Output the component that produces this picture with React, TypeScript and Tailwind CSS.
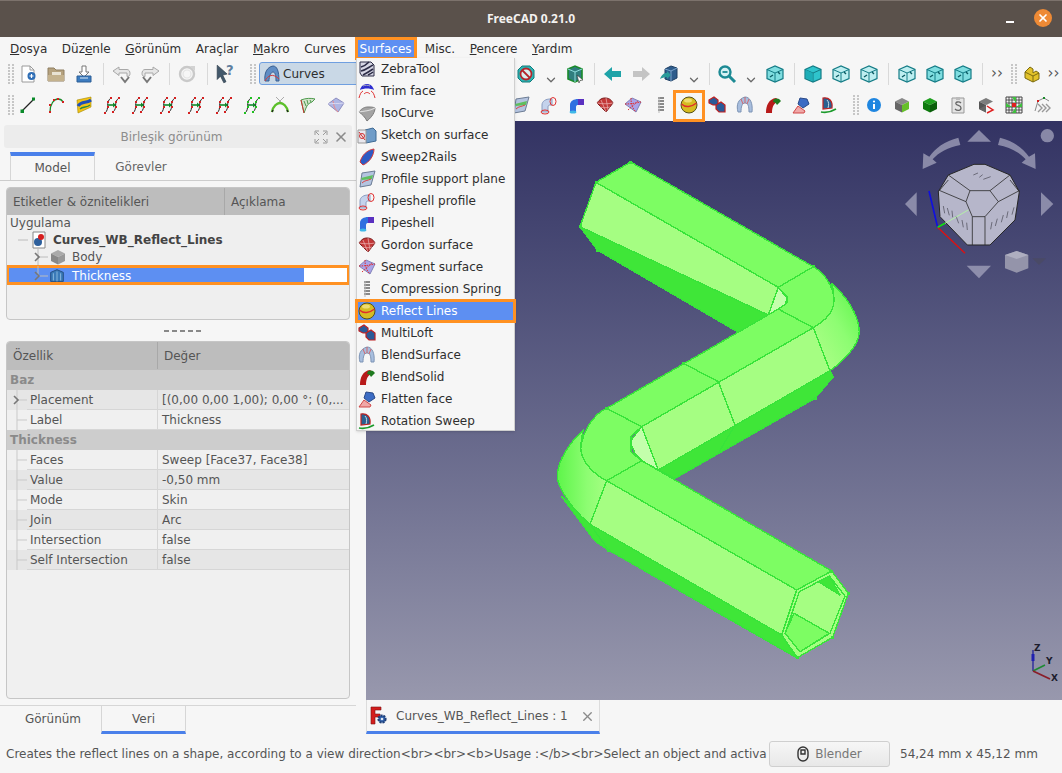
import type { ReactNode } from "react";
import { ChevronDown, X } from "lucide-react";

// Icons
function Ico({ children, size = 20 }: { children: ReactNode; size?: number }) {
  return (
    <svg width={size} height={size} viewBox="0 0 20 20" fill="none" className="shrink-0">
      {children}
    </svg>
  );
}

const NewDoc = () => (
  <Ico>
    <path d="M4 2h8l4 4v12H4z" fill="#fff" stroke="#9a9a9a" />
    <path d="M12 2v4h4" stroke="#9a9a9a" />
    <circle cx="13.5" cy="12" r="4" fill="#2d6db5" />
    <path d="M11.5 12h4M13.5 10v4" stroke="#fff" strokeWidth="1.2" />
  </Ico>
);
const OpenDoc = () => (
  <Ico>
    <path d="M2 4h6l2 2h8v11H2z" fill="#b5a27f" stroke="#8f7f62" />
    <path d="M6 8h9v3H6z" fill="#e9e3d4" />
    <path d="M2 11h16v6H2z" fill="#c4b28e" />
  </Ico>
);
const SaveDoc = () => (
  <Ico>
    <path d="M8 2h4v6h3l-5 5-5-5h3z" fill="#fff" stroke="#777" />
    <path d="M3 12h14v6H3z" fill="#3c7cc0" stroke="#2c5f96" />
    <path d="M6 14h8" stroke="#dce9f5" />
  </Ico>
);
const Undo = ({ flip = false }: { flip?: boolean }) => (
  <Ico>
    <g transform={flip ? "matrix(-1 0 0 1 20 0)" : undefined}>
      <path d="M1 7l6-4v2.5h8c2 0 3 2 3 4s-1 3-3 3V9H7v2.5z" fill="#e6e6e6" stroke="#a8a8a8" />
      <path d="M9 13l4 5 4-5" stroke="#777" strokeWidth="2" />
    </g>
  </Ico>
);
const Refresh = () => (
  <Ico>
    <circle cx="10" cy="10" r="7" stroke="#c9c9c9" strokeWidth="2.4" />
    <circle cx="10" cy="10" r="4" stroke="#e4e4e4" strokeWidth="1.2" />
    <path d="M13 2h5v5z" fill="#d2d2d2" />
  </Ico>
);
const WhatsThis = () => (
  <Ico size={22}>
    <path d="M2 2l9 8-4 1 3 6-2 1-3-6-3 3z" fill="#43586b" stroke="#2a3a48" strokeWidth=".6" />
    <text x="10" y="11" fontSize="12" fontWeight="700" fill="#5f7f9f" fontFamily="DejaVu Sans, sans-serif">?</text>
  </Ico>
);
const NoEntry = () => (
  <Ico>
    <path d="M6 2h8l4 4v8l-4 4H6l-4-4V6z" fill="#2cb5b5" stroke="#137a7a" />
    <circle cx="10" cy="10" r="5.5" fill="#d8f0f0" stroke="#b3262c" strokeWidth="1.8" />
    <path d="M6 6l8 8" stroke="#b3262c" strokeWidth="1.8" />
  </Ico>
);
const BoxSel = () => (
  <Ico>
    <path d="M3 5l7-3 7 3v10l-7 3-7-3z" fill="#307e7e" stroke="#1a8a2a" strokeWidth="1.6" />
    <path d="M3 5l7 3 7-3M10 8v10" stroke="#8fdcdc" />
    <path d="M12 11l6 5-3 .5-1 2.5z" fill="#fff" stroke="#333" strokeWidth=".6" />
  </Ico>
);
const Arrow = ({ dir, color }: { dir: "l" | "r"; color: string }) => (
  <Ico>
    <path
      d={dir === "l" ? "M1 10l8-7v4h9v6H9v4z" : "M19 10l-8-7v4H2v6h9v4z"}
      fill={color}
    />
  </Ico>
);
const BoxArrow = () => (
  <Ico>
    <path d="M6 5l6-3 6 2v10l-6 3-6-2z" fill="#2e5c8c" stroke="#1e3f63" />
    <path d="M6 5l6 2 6-3M12 7v10" stroke="#7aa4cc" />
    <path d="M1 15c2-5 4-6 7-6V7l4 4-4 4v-2c-3 0-5 1-7 2z" fill="#2a9a9a" />
  </Ico>
);
const ZoomIco = () => (
  <Ico>
    <circle cx="8" cy="8" r="5.5" stroke="#1c8a94" strokeWidth="2.4" fill="#d7f1f3" />
    <path d="M5.5 8h5" stroke="#1c8a94" strokeWidth="1.8" />
    <path d="M12 12l6 6" stroke="#1c8a94" strokeWidth="3" />
  </Ico>
);
const TealCube = ({ v }: { v: number }) => (
  <Ico>
    <path d="M2 5.5L10 2l8 3.5v9L10 18l-8-3.5z" fill={v === 0 ? "#2fc4cc" : v > 3 ? "#7fdde0" : "#bdeef0"} stroke="#147c86" strokeWidth="1.2" />
    <path d="M2 5.5L10 9l8-3.5M10 9v9" stroke="#147c86" strokeWidth="1" />
    {v === 0 && <path d="M3 6l6.5 3v8L3 14z" fill="#1eaeb8" />}
    {v > 0 && <path d="M5 13l3-2M13 8l2 2" stroke="#0c5a62" strokeWidth="1.4" />}
  </Ico>
);
const PartIco = () => (
  <Ico>
    <path d="M3 8l5-5 3 2v4l3-2 3 2v6l-6 3-8-4z" fill="#e2c22a" stroke="#7a6a10" />
    <path d="M3 8l8 4v6M11 12l6-3" stroke="#7a6a10" />
  </Ico>
);

// Curves workbench
const LineIco = () => (
  <Ico>
    <path d="M4 16L16 4" stroke="#222" strokeWidth="1.2" />
    <rect x="2.5" y="14.5" width="3.5" height="3.5" fill="#0a8a2a" />
    <rect x="14" y="2.5" width="3" height="3" fill="#0a8a2a" />
  </Ico>
);
const ArcIco = () => (
  <Ico>
    <path d="M4 17C4 9 8 4 12 4c2 0 4 1 5 3" stroke="#1a8a2a" strokeWidth="1.3" />
    {[[4, 17], [4, 10], [8, 5], [12, 4], [17, 7]].map(([x, y], i) => (
      <rect key={i} x={x - 1} y={y - 1} width="2" height="2" fill="#d42020" />
    ))}
  </Ico>
);
const YellowIco = () => (
  <Ico>
    <path d="M3 5l14-3v10L4 18z" fill="#f2c316" stroke="#a38600" strokeWidth=".6" />
    <path d="M4 11c4-6 8-2 13-6" stroke="#1d4fb8" strokeWidth="3" />
    <path d="M6 14c3-3 7-1 10-4" stroke="#2b8a3e" strokeWidth="1.3" />
  </Ico>
);
const CurveIco = ({ dot = "#d42020" }: { dot?: string }) => (
  <Ico>
    <path d="M3 18C8 14 3 7 9 3M11 17c5-4 0-10 6-14" stroke="#222" strokeWidth="1" />
    <path d="M6 10h7" stroke="#108a2a" strokeWidth="1.6" />
    <path d="M11 7.5l3 2.5-3 2.5z" fill="#108a2a" />
    {[[3, 18], [6, 12], [6, 7], [9, 3], [11, 17], [14, 12], [14, 7], [17, 3]].map(([x, y], i) => (
      <rect key={i} x={x - 1} y={y - 1} width="2" height="2" fill={dot} />
    ))}
  </Ico>
);
const TrimX = () => (
  <Ico>
    <path d="M6 2l8 8M14 2l-8 8" stroke="#aaa" />
    <path d="M2 17C3 11 7 8 10 8s7 3 8 9" stroke="#5cc02a" strokeWidth="2.4" />
    <path d="M2 17l1-2M18 17l-1-2" stroke="#222" strokeWidth="1.4" />
  </Ico>
);
const Hatched = () => (
  <Ico>
    <path d="M3 5c5-2 10-2 14-1l-3 3c-3 1-5 3-6 6l-2 5z" fill="#d4e4cc" stroke="#4d9a4d" />
    <path d="M6 6l2 5M9 5l1 4M12 5l1 2" stroke="#4d9a4d" />
    <path d="M3 5l3 13" stroke="#c33" />
  </Ico>
);
const BlueSheet = () => (
  <Ico>
    <path d="M2 9l8-6 8 5-6 9z" fill="#aeb6e4" stroke="#8d8dc0" />
    <path d="M7 6c1 3 0 6 5 11" stroke="#e88" />
    <path d="M2 9c5-1 10 0 16-1" stroke="#d8d8f0" />
  </Ico>
);
const Zebra = () => (
  <Ico>
    <path d="M3 3h11l3 3v11H5l-2-3z" fill="#d6d6e4" stroke="#2c2c46" />
    <path d="M4 8c4-1 6-3 8-5M4 12c5-1 8-4 12-6M6 16c4-2 7-4 10-6M11 16c2-1 4-2 5-3" stroke="#2c2c46" strokeWidth="1.6" />
  </Ico>
);
const TrimFace = () => (
  <Ico>
    <path d="M3 9c1-4 4-6 7-6s6 2 7 6c-4-2-10-2-14 0z" fill="#2d2dd0" />
    <path d="M6 5c2-1 5-1 7 0" stroke="#aab" />
    <path d="M2 17c1-4 2-6 4-7M18 17c-1-4-2-6-4-7M7 13c2-2 4-2 6 0" stroke="#e03030" />
  </Ico>
);
const IsoCurve = () => (
  <Ico>
    <path d="M2 9c3-4 6-5 9-5s5 0 7 1c0 4-3 9-8 13-2-4-5-7-8-9z" fill="#a3a3a3" stroke="#7a7a7a" />
    <path d="M2 9c5-1 11-1 16-4" stroke="#e4e4e4" />
  </Ico>
);
const SketchSurf = () => (
  <Ico>
    <path d="M8 5l8-2 3 3v10l-10 2z" fill="#6f9cc8" stroke="#3f6a94" />
    <path d="M1 5h8v13H1z" fill="#e8e8ee" stroke="#999" />
    <circle cx="5" cy="11" r="2.5" stroke="#d03030" />
    <path d="M2 7l6 8" stroke="#d03030" />
  </Ico>
);
const Sweep2 = () => (
  <Ico>
    <path d="M3 15C5 8 10 3 17 2c0 6-4 13-11 16z" fill="#2d5ac4" stroke="#d43c3c" />
  </Ico>
);
const Profile = () => (
  <Ico>
    <path d="M5 4l13-2-4 14-11 2z" fill="#b4c4e0" stroke="#6c7c94" />
    <path d="M4 9l12-3-1 4-10 1z" fill="#5fbf5f" />
    <path d="M5 14c3-3 5-2 9-4" stroke="#d44" />
  </Ico>
);
const PipeProfile = () => (
  <Ico>
    <path d="M3 17V10c0-4 4-6 8-6h2v6h-2c-1 0-2 .5-2 2v5z" fill="#c4d2ec" stroke="#8a9cc0" />
    <ellipse cx="14" cy="6.5" rx="3" ry="4" stroke="#e03030" />
    <ellipse cx="6" cy="17" rx="4" ry="2" stroke="#e03030" />
  </Ico>
);
const Pipeshell = () => (
  <Ico>
    <path d="M3 17V10c0-4 4-6 8-6h6v6h-6c-1 0-2 .5-2 2v5z" fill="#2f6fe0" />
    <path d="M11 4h6v6h-6z" fill="#5a30c0" />
    <ellipse cx="6" cy="17" rx="3.4" ry="1.6" fill="#3fb8e8" />
  </Ico>
);
const Gordon = () => (
  <Ico>
    <path d="M2 8c3-4 5-5 8-5s6 1 8 5l-7 9z" fill="#c33838" stroke="#7a1c1c" />
    <path d="M6 5l5 12M11 3l2 12M2 8c5 1 11 1 16 0M5 12c3 1 7 1 10 0" stroke="#e8a8a8" strokeWidth=".8" />
  </Ico>
);
const Segment = () => (
  <Ico>
    <path d="M2 9l7-6 9 4-5 10z" fill="#aaa4e8" stroke="#8282b8" />
    <path d="M2 9c6 0 11-1 16-2M8 3c0 5 1 10 5 14M5 15l10-9" stroke="#e03030" strokeDasharray="1.5 1" />
  </Ico>
);
const Spring = () => (
  <Ico>
    <path d="M7 3h6M7 6h6M7 9h6M7 12h6M7 15h6" stroke="#666" strokeWidth="1.6" />
    <path d="M8 2v16" stroke="#bbb" />
  </Ico>
);
const Reflect = () => (
  <Ico>
    <circle cx="10" cy="10" r="8" fill="#d6bc22" stroke="#55501a" />
    <path d="M2.5 9c4 4 10 3 15-1" stroke="#e02c2c" strokeWidth="1.4" />
    <ellipse cx="9" cy="5.5" rx="4" ry="2" fill="#eedc70" />
  </Ico>
);
const MultiLoft = () => (
  <Ico>
    <path d="M2 5l5-3 4 3v5H6L2 8z" fill="#2a5a98" stroke="#c02020" strokeWidth="1.2" />
    <path d="M9 10l5-3 4 3v7h-6l-3-3z" fill="#2a5a98" stroke="#c02020" strokeWidth="1.2" />
  </Ico>
);
const BlendSurf = () => (
  <Ico>
    <path d="M3 17C1 10 3 4 10 2c5 0 8 6 7 15h-3c0-6-1-9-4-9s-4 4-4 9z" fill="#a8bede" stroke="#7d94b5" />
    <path d="M10 2v6M6 4l2 5M14 4l-2 5" stroke="#e05050" strokeWidth=".8" />
  </Ico>
);
const BlendSolid = () => (
  <Ico>
    <path d="M3 18c0-8 3-14 10-15l4 3c-5 1-8 4-8 12z" fill="#b81a1a" />
    <path d="M11 4c3-1 5-1 7 2l-4 4c-1-2-2-3-4-3z" fill="#1f7a1f" />
  </Ico>
);
const Flatten = () => (
  <Ico>
    <path d="M9 3l7 1 2 5-6 4-5-4z" fill="#3c6cc4" stroke="#2a4a88" />
    <path d="M2 18l5-7 7 5-1 2z" fill="#f0a8a8" stroke="#d04848" />
  </Ico>
);
const Rotation = () => (
  <Ico>
    <path d="M4 3c6-1 10 3 9 10l-9 1z" fill="#2a6090" stroke="#c02020" strokeWidth="1.2" />
    <path d="M8 5c2 2 2 5 1 8" stroke="#c9d8e8" />
    <path d="M2 17c5 1 10 0 15-3" stroke="#1a9a2a" strokeWidth="1.6" />
  </Ico>
);
const InfoIco = () => (
  <Ico>
    <circle cx="10" cy="10" r="7" fill="#1f86e0" />
    <path d="M10 9v5" stroke="#fff" strokeWidth="2" />
    <circle cx="10" cy="6.5" r="1.1" fill="#fff" />
  </Ico>
);
const GrayCube = ({ top, left, right }: { top: string; left: string; right: string }) => (
  <Ico>
    <path d="M10 3l7 3.5L10 10 3 6.5z" fill={top} />
    <path d="M3 6.5L10 10v7.5L3 14z" fill={left} />
    <path d="M17 6.5L10 10v7.5l7-3.5z" fill={right} />
  </Ico>
);
const SheetS = () => (
  <Ico>
    <path d="M4 3h12v15H4z" fill="#e4e4e4" stroke="#999" />
    <path d="M8 2h4v3H8z" fill="#bbb" />
    <path d="M13 8c-2-2-6-1-5 1s5 1 5 4-4 3-6 1" stroke="#666" strokeWidth="1.3" />
  </Ico>
);
const GrayRed = () => (
  <Ico>
    <path d="M10 3l7 3.5L10 10 3 6.5z" fill="#7c7c7c" />
    <path d="M3 6.5L10 10v7.5L3 14z" fill="#555" />
    <path d="M17 6.5L10 10v7.5l-7-3.5z" fill="#666" />
    <path d="M11 11l6 4-6 3" stroke="#e02020" strokeWidth="1.5" />
  </Ico>
);
const GridIco = () => (
  <Ico>
    <path d="M2 2h16v16H2z" fill="#f4f4f4" stroke="#444" />
    <path d="M5 2v16M8 2v16M12 2v16M15 2v16M2 5h16M2 8h16M2 12h16M2 15h16" stroke="#333" strokeWidth=".8" />
    <path d="M8 8h4v4H8z" fill="#e02020" />
    <path d="M8 2h4v6M8 18h4v-6M2 8v4h6M18 8v4h-6" fill="#3dbf3d" />
  </Ico>
);
const WireArrow = () => (
  <Ico>
    <path d="M3 16L6 6l6-3 5 3" stroke="#888" />
    <path d="M10 9l4 4-4 4M14 9l4 4-4 4M6 9l4 4-4 4" stroke="#999" strokeWidth="1.4" />
    <rect x="5" y="5" width="2" height="2" fill="#d42020" />
    <rect x="11" y="2" width="2" height="2" fill="#1a8a2a" />
  </Ico>
);
const CurvesLogo = () => (
  <Ico>
    <path d="M3 17C2 9 5 3 11 2c4 0 6 5 6 15h-3c0-6-1-9-3-9s-4 4-4 9z" fill="#5f8dc4" stroke="#3a5f90" />
    <path d="M3 17c3-6 8-8 14-2" stroke="#d43c3c" />
  </Ico>
);
const FreeCadIco = () => (
  <Ico size={20}>
    <path d="M2 1h10v3H6v4h5v3H6v7H2z" fill="#d41e1e" stroke="#7a1010" strokeWidth=".6" />
    <circle cx="13" cy="13" r="3.6" fill="#2f5fa8" stroke="#1f3f78" strokeWidth="2" strokeDasharray="2 1" />
    <circle cx="13" cy="13" r="1.3" fill="#dfe8f4" />
  </Ico>
);

// Toolbar pieces
function Cell({ children }: { children: ReactNode }) {
  return <div className="flex h-7 w-7 shrink-0 items-center justify-center">{children}</div>;
}
function Grip() {
  return (
    <div className="grid w-[6px] shrink-0 grid-cols-2 gap-x-[1px] gap-y-[1px]">
      {Array.from({ length: 14 }).map((_, i) => (
        <span key={i} className="h-[2px] w-[2px] bg-[#c6c6c6]" />
      ))}
    </div>
  );
}
function Sep({ className }: { className: string }) {
  return <div className={`h-[22px] w-px shrink-0 bg-[#d9d9d9] ${className}`} />;
}
function Chevron({ width }: { width: string }) {
  return (
    <div className={`flex h-7 shrink-0 items-end justify-center pb-[1px] ${width}`}>
      <ChevronDown size={14} strokeWidth={2.2} className="text-[#6a6a6a]" />
    </div>
  );
}
function More({ width }: { width: string }) {
  return (
    <div className={`flex h-7 shrink-0 items-center justify-center text-[15px] leading-none text-[#555] ${width}`}>
      ››
    </div>
  );
}

const menuItems: [string, ReactNode][] = [
  ["ZebraTool", <Zebra />],
  ["Trim face", <TrimFace />],
  ["IsoCurve", <IsoCurve />],
  ["Sketch on surface", <SketchSurf />],
  ["Sweep2Rails", <Sweep2 />],
  ["Profile support plane", <Profile />],
  ["Pipeshell profile", <PipeProfile />],
  ["Pipeshell", <Pipeshell />],
  ["Gordon surface", <Gordon />],
  ["Segment surface", <Segment />],
  ["Compression Spring", <Spring />],
  ["Reflect Lines", <Reflect />],
  ["MultiLoft", <MultiLoft />],
  ["BlendSurface", <BlendSurf />],
  ["BlendSolid", <BlendSolid />],
  ["Flatten face", <Flatten />],
  ["Rotation Sweep", <Rotation />],
];

function TopMenu() {
  const plain = "px-[7.25px]";
  return (
    <div className="flex h-[23px] shrink-0 items-center bg-[#f6f6f6] pl-[2.75px] text-[#2e2e2e]">
      <span className={plain}><u>D</u>osya</span>
      <span className={plain}>Düz<u>e</u>nle</span>
      <span className={plain}><u>G</u>örünüm</span>
      <span className={plain}>Araçlar</span>
      <span className={plain}><u>M</u>akro</span>
      <span className={plain}>Curves</span>
      <span className="ml-[1.5px] mr-[1px] flex h-[23px] items-center border-[3px] border-[#ff9122] bg-[#5d8ff2] px-[2px] text-white">
        Surfaces
      </span>
      <span className={plain}>Misc.</span>
      <span className={plain}><u>P</u>encere</span>
      <span className={plain}><u>Y</u>ardım</span>
    </div>
  );
}

function ToolbarOne() {
  return (
    <div className="flex h-[27px] shrink-0 items-center bg-[#f6f6f6] pl-2">
      <Grip />
      <Cell><NewDoc /></Cell>
      <Cell><OpenDoc /></Cell>
      <Cell><SaveDoc /></Cell>
      <Sep className="ml-[5px] mr-[4px]" />
      <Cell><Undo /></Cell>
      <Cell><Undo flip /></Cell>
      <Sep className="ml-[5px] mr-[3px]" />
      <Cell><Refresh /></Cell>
      <Sep className="ml-[6px] mr-[4px]" />
      <Cell><WhatsThis /></Cell>
      <div className="ml-[10px]"><Grip /></div>
      <div className="ml-[3px] flex h-[23px] w-[253px] shrink-0 items-center gap-[1px] rounded-[3px] border border-[#6f9fe0] bg-[#c9d8e6] pl-[2px] text-[#2e2e2e]">
        <CurvesLogo />
        Curves
      </div>
      <Cell><NoEntry /></Cell>
      <Chevron width="w-[21px]" />
      <Cell><BoxSel /></Cell>
      <Sep className="ml-[5px] mr-[4px]" />
      <Cell><Arrow dir="l" color="#1ea3a8" /></Cell>
      <Cell><Arrow dir="r" color="#c4c4c4" /></Cell>
      <Cell><BoxArrow /></Cell>
      <Chevron width="w-[21px]" />
      <Sep className="ml-[5px] mr-[3px]" />
      <Cell><ZoomIco /></Cell>
      <Chevron width="w-[20px]" />
      <Cell><TealCube v={5} /></Cell>
      <Sep className="ml-[5px] mr-[4px]" />
      <Cell><TealCube v={0} /></Cell>
      <Cell><TealCube v={1} /></Cell>
      <Cell><TealCube v={2} /></Cell>
      <Sep className="ml-[5px] mr-[4px]" />
      <Cell><TealCube v={3} /></Cell>
      <Cell><TealCube v={4} /></Cell>
      <Cell><TealCube v={5} /></Cell>
      <Sep className="ml-[5px] mr-0" />
      <More width="w-7" />
      <Grip />
      <div className="ml-px"><Cell><PartIco /></Cell></div>
      <More width="w-[15px]" />
    </div>
  );
}

function ToolbarTwo() {
  return (
    <div className="flex h-[34px] shrink-0 items-center bg-[#f6f6f6] pl-2 pt-px">
      <Grip />
      <Cell><LineIco /></Cell>
      <Cell><ArcIco /></Cell>
      <Cell><YellowIco /></Cell>
      <Cell><CurveIco /></Cell>
      <Cell><CurveIco /></Cell>
      <Cell><CurveIco /></Cell>
      <Cell><CurveIco /></Cell>
      <Cell><CurveIco /></Cell>
      <Cell><CurveIco dot="#1fc01f" /></Cell>
      <Cell><TrimX /></Cell>
      <Cell><Hatched /></Cell>
      <Cell><BlueSheet /></Cell>
      <div className="w-[157px] shrink-0" />
      <Cell><Profile /></Cell>
      <Cell><PipeProfile /></Cell>
      <Cell><Pipeshell /></Cell>
      <Cell><Gordon /></Cell>
      <Cell><Segment /></Cell>
      <Cell><Spring /></Cell>
      <div className="relative">
        <Cell><Reflect /></Cell>
        <div className="absolute left-[-2px] top-[-1px] h-[32px] w-[32px] border-[3px] border-[#ff9122]" />
      </div>
      <Cell><MultiLoft /></Cell>
      <Cell><BlendSurf /></Cell>
      <Cell><BlendSolid /></Cell>
      <Cell><Flatten /></Cell>
      <Cell><Rotation /></Cell>
      <div className="ml-[10px] mr-px"><Grip /></div>
      <Cell><InfoIco /></Cell>
      <Cell><GrayCube top="#8a8a8a" left="#666" right="#67c02a" /></Cell>
      <Cell><GrayCube top="#1fa01f" left="#0e7a0e" right="#0a5f0a" /></Cell>
      <Cell><SheetS /></Cell>
      <Cell><GrayRed /></Cell>
      <Cell><GridIco /></Cell>
      <Cell><WireArrow /></Cell>
    </div>
  );
}

function Dropdown() {
  return (
    <div className="absolute left-[356px] top-[58px] z-20 h-[373px] w-[159px] border-x border-b border-[#cfcfcf] bg-[#f6f6f6] text-[#2e2e2e] shadow-sm">
      {menuItems.map(([label, icon]) =>
        label === "Reflect Lines" ? (
          <div
            key={label}
            className="relative -mx-[2px] -my-px flex h-[24px] items-center border-[3px] border-[#ff9122] bg-[#5d8ff2] text-white"
          >
            <span className="-ml-px flex w-[20px] justify-center">{icon}</span>
            <span className="ml-[4px]">{label}</span>
          </div>
        ) : (
          <div key={label} className="flex h-[22px] items-center">
            <span className="flex w-[20px] justify-center">{icon}</span>
            <span className="ml-[4px]">{label}</span>
          </div>
        ),
      )}
    </div>
  );
}

// Tree branch drawing
function Branch({ arrow, up = true, down = false, light = false }: { arrow?: boolean; up?: boolean; down?: boolean; light?: boolean }) {
  const c = light ? "#c9c9c9" : "#bcbcbc";
  return (
    <svg width="20" height="20" viewBox="0 0 20 20" className="shrink-0">
      {up && <path d="M10 0v10" stroke={c} />}
      {down && <path d="M10 10v10" stroke={c} />}
      <path d="M10 10h10" stroke={c} />
      {arrow && <path d="M7 6l4 4-4 4" stroke="#777" strokeWidth="1.6" fill="none" />}
    </svg>
  );
}

function LeftTree() {
  return (
    <div className="ml-[6px] mr-[2px] mt-[6px] h-[133px] shrink-0 overflow-hidden rounded-[4px] border border-[#c6c6c6] bg-[#efefef]">
      <div className="flex h-[27px] bg-[#bdbdbd] text-[#555]">
        <div className="flex w-[218px] items-center border-r border-[#a8a8a8] pl-[6px]">Etiketler &amp; öznitelikleri</div>
        <div className="flex items-center pl-[6px]">Açıklama</div>
      </div>
      <div className="pl-[3px] leading-[16px] text-[#555]">Uygulama</div>
      <div className="flex h-[18px] items-center text-[#444]">
        <div className="ml-[1px]"><Branch up={false} /></div>
        <div className="ml-[3px]">
          <svg width="16" height="18" viewBox="0 0 16 18">
            <path d="M2 1h12v16H2z" fill="#fff" stroke="#888" />
            <circle cx="7" cy="11" r="4" fill="#2d5f9c" />
            <circle cx="10" cy="6" r="3" fill="#d61e1e" />
          </svg>
        </div>
        <span className="ml-[6px] font-bold">Curves_WB_Reflect_Lines</span>
      </div>
      <div className="flex h-[16px] items-center pl-[21px] text-[#555]">
        <Branch arrow down />
        <GrayCube top="#aaa" left="#888" right="#999" />
        <span className="ml-[4px]">Body</span>
      </div>
      <div className="relative -mx-px flex h-[20px] items-center border-[3px] border-[#ff9122] bg-white">
        <div className="flex h-full w-[295px] items-center bg-[#5d8ff2] pl-[19px] pt-px text-white">
          <Branch arrow />
          <Ico size={18}>
            <path d="M3 6l7-3 7 3v10H3z" fill="#3a7ab8" stroke="#204a78" />
            <path d="M10 5v11M6 7v8M14 7v8" stroke="#8fbce0" />
          </Ico>
          <span className="ml-[6px]">Thickness</span>
        </div>
      </div>
    </div>
  );
}

const baseRows = [
  { name: "Placement", value: "[(0,00 0,00 1,00); 0,00 °; (0,...", arrow: true },
  { name: "Label", value: "Thickness" },
];
const thicknessRows = [
  { name: "Faces", value: "Sweep [Face37, Face38]" },
  { name: "Value", value: "-0,50 mm" },
  { name: "Mode", value: "Skin" },
  { name: "Join", value: "Arc" },
  { name: "Intersection", value: "false" },
  { name: "Self Intersection", value: "false" },
];

function PropGroup({ label }: { label: string }) {
  return <div className="flex h-5 items-center bg-[#cdcdcd] pl-[3px] font-bold text-[#8a8a8a]">{label}</div>;
}

function PropRow({ name, value, arrow, odd }: { name: string; value: string; arrow?: boolean; odd: boolean }) {
  return (
    <div className={`flex h-5 text-[#555] ${odd ? "bg-[#e6e6e6]" : "bg-[#f0f0f0]"}`}>
      <Branch arrow={arrow} down light />
      <div className="flex w-[131px] items-center border-b border-r border-[#d6d6d6] pl-[3px]">{name}</div>
      <div className="flex min-w-0 flex-1 items-center overflow-hidden whitespace-nowrap border-b border-[#d6d6d6] pl-[4px]">{value}</div>
    </div>
  );
}

function PropertyPanel() {
  return (
    <div className="ml-[6px] mr-[2px] flex-1 overflow-hidden rounded-[4px] border border-[#c6c6c6] bg-[#f0f0f0]">
      <div className="flex h-[28px] bg-[#bdbdbd] pb-px text-[#555]">
        <div className="flex w-[151px] items-center border-r border-[#a8a8a8] pl-[6px]">Özellik</div>
        <div className="flex items-center pl-[6px]">Değer</div>
      </div>
      <PropGroup label="Baz" />
      {baseRows.map((r, i) => (
        <PropRow key={r.name} {...r} odd={i % 2 === 0} />
      ))}
      <PropGroup label="Thickness" />
      {thicknessRows.map((r, i) => (
        <PropRow key={r.name} {...r} odd={i % 2 === 1} />
      ))}
    </div>
  );
}

function LeftPanel() {
  return (
    <div className="flex w-[366px] shrink-0 flex-col bg-[#f6f6f6] pr-[14px]">
      <div className="ml-1 mt-1 flex h-[23px] shrink-0 items-center rounded-[3px] bg-[#ececec] text-[#8c8c8c]">
        <span className="flex-1 pl-[25px] text-center">Birleşik görünüm</span>
        <svg width="14" height="14" viewBox="0 0 14 14" className="mr-[5px]" fill="none" stroke="#9a9a9a">
          <path d="M1 5V1h4M9 1h4v4M13 9v4H9M5 13H1V9M2 2l3 3M12 2L9 5M12 12L9 9M2 12l3-3" />
        </svg>
        <X size={16} strokeWidth={2.4} className="mr-[3px] text-[#8a8a8a]" />
      </div>
      <div className="mt-1 -mr-[14px] flex h-[29px] shrink-0 border-b border-[#cdcdcd]">
        <div className="ml-[10px] flex w-[85px] items-center justify-center border-x border-t-4 border-x-[#d6d6d6] border-t-[#4a80ea] bg-[#f6f6f6] text-[#555]">
          Model
        </div>
        <div className="flex w-[92px] items-center justify-center pt-[2px] text-[#666]">Görevler</div>
      </div>
      <LeftTree />
      <div className="flex h-[21px] shrink-0 items-center justify-center gap-[3px] pl-[12px]">
        {[0, 1, 2, 3, 4].map((i) => (
          <span key={i} className="h-[2px] w-[5px] bg-[#888]" />
        ))}
      </div>
      <PropertyPanel />
      {/* Bottom tabs */}
      <div className="-mr-[4px] mt-[6px] mb-px flex h-[29px] shrink-0 border-t border-[#d6d6d6] text-[#555]">
        <div className="flex w-[101px] items-center justify-center pb-[3px] pl-[5px]">Görünüm</div>
        <div className="flex w-[85px] items-center justify-center border-x border-b-[3px] border-x-[#d6d6d6] border-b-[#4a80ea]">Veri</div>
      </div>
    </div>
  );
}

// 3D view
const LIGHT = "#a5fe82";
const MID = "#7dfd63";
const DARK = "#3fe638";

const vertices = [
  [630.7, 162], [596, 182.3], [580, 226.7], [597.3, 250], [813.3, 266.7], [683, 363.3],
  [606.7, 408.3], [815, 398.3], [608.3, 550], [831.7, 571], [848.3, 593.3], [832.7, 637.3], [797.3, 657.7],
];

function Pipe() {
  return (
    <g stroke="#38e43a" strokeWidth="1.4" strokeLinejoin="round" shapeRendering="crispEdges">
      <defs>
        <linearGradient id="elbowA" x1="0.9" y1="0" x2="0.2" y2="0.8">
          <stop offset="0" stopColor="#5ef54a" />
          <stop offset="0.55" stopColor="#8dfd72" />
          <stop offset="1" stopColor="#a5fe82" />
        </linearGradient>
        <linearGradient id="elbowB" x1="0" y1="0" x2="1" y2="0">
          <stop offset="0" stopColor="#5ef54a" />
          <stop offset="0.6" stopColor="#8dfd72" />
          <stop offset="1" stopColor="#a5fe82" />
        </linearGradient>
      </defs>
      {/* first straight */}
      <polygon points="580,226.7 597.3,250 738.3,332.3 768.3,315" fill={DARK} />
      <polygon points="630.7,162 596,182.3 778.3,287.3 813.3,266.7" fill={MID} />
      <polygon points="596,182.3 580,226.7 768.3,315 778.3,287.3" fill={LIGHT} />
      {/* first elbow */}
      <path d="M778.3,287.3 L787,298 L785,305 L778.3,309 L768.3,315Z" fill="#c3ffab" />
      <path d="M831.7,283.3 C846,296 859,315 859.3,331.7 C859,345 845,360 830,370.7 L813.3,327.7 C826,320 834,312 834,300 Q834,291 831.7,283.3Z" fill="url(#elbowA)" />
      <path d="M813.3,266.7 C825,273 834,288 834,300 C834,312 826,320 813.3,327.7 L778.3,309 L787,303 L787,296 L778.3,287.3Z" fill={MID} />
      {/* second straight */}
      <polygon points="830,370.7 833.3,376.7 815,398.3 675,478.3 658.3,470" fill={DARK} />
      <polygon points="778.3,309 606.7,408.3 641.7,426.7 813.3,327.7" fill={MID} />
      <polygon points="813.3,327.7 641.7,426.7 658.3,470 830,370.7" fill={LIGHT} />
      <path d="M683.3,363.3L718.3,381.7L735,425M735,425L718.3,453.3" fill="none" />
      {/* second elbow */}
      <path d="M561.7,496.7 L590,524.3 L608.3,550 L595,541Z" fill={DARK} />
      <path d="M641.7,426.7 L630,441.7 L635,453.3 L641.7,460.7 L658.3,470Z" fill="#c3ffab" />
      <path d="M583.3,430 C572,440 557,460 557.3,476.7 C558,490 575,512 590,524.3 L606.7,480.7 C595,475 581,462 580.7,448.3 Q581,438 583.3,430Z" fill="url(#elbowB)" />
      <path d="M606.7,408.3 C594,414 583,430 580.7,448.3 C581,462 595,475 606.7,480.7 L641.7,460.7 L631,452 L631,436 L641.7,426.7Z" fill={MID} />
      {/* third straight */}
      <polygon points="590,524.3 608.3,550 796.7,657.7 781.7,635" fill={DARK} />
      <polygon points="641.7,460.7 606.7,480.7 796.7,590 831.7,571" fill={MID} />
      <polygon points="606.7,480.7 590,524.3 781.7,635 796.7,590" fill={LIGHT} />
      {/* open end */}
      <polygon points="831.7,571 848.3,593.3 832.7,637.3 797.3,657.7 781.7,635 796.7,590" fill={LIGHT} />
      <polygon points="829.3,576 845,596 830,633.3 800,651.7 785,633.3 799.3,591.7" fill={LIGHT} />
      <polygon points="794,613.3 829.3,633.3 800,651.7 785,633.3" fill={MID} />
      <polygon points="818.3,581.7 829.3,576 840,595" fill={DARK} />
      {vertices.map(([x, y], i) => (
        <rect key={i} x={x - 1.5} y={y - 1.5} width="3" height="3" fill="#38e43a" stroke="none" />
      ))}
    </g>
  );
}

function NavCube() {
  const soft = "#a4a4bd";
  return (
    <g transform="translate(890 120) scale(.3333)">
      <g fill={soft} opacity=".75">
        <polygon points="267,30 232,65 303,65" />
        <polygon points="80,217 45,252 80,288" />
        <polygon points="453,217 490,252 453,288" />
        <polygon points="230,437 303,437 267,475" />
        <circle cx="472" cy="47" r="20" />
        <path d="M205,53 C165,63 135,85 118,110 L100,100 L98,147 L140,128 L128,118 C145,98 175,82 211,75Z" />
        <path d="M330,53 C370,63 400,85 417,110 L435,100 L437,147 L395,128 L407,118 C390,98 360,82 324,75Z" />
      </g>
      <polygon points="175,165 252,133 285,133 360,165 388,215 375,300 300,375 232,375 150,290 145,215" fill="#b6b6ca" stroke="#262626" strokeWidth="3" strokeLinejoin="round" />
      <g fill="none" stroke="#2a2a2a" strokeWidth="2.4">
        <path d="M175,165 L240,212 L300,212 L360,165" />
        <path d="M150,212 L228,245 L247,290 L285,290 L325,245 L388,212" />
        <path d="M240,212 L228,245 M300,212 L325,245" />
        <path d="M247,290 L247,375 M285,290 L285,375" />
        <path d="M145,215 L175,180 M388,215 L360,180" />
      </g>
      <g fill="none" stroke="#6a6a78" strokeWidth="3">
        <path d="M250,165l14,-6M268,172l10,-8M280,178l22,-8" />
        <path d="M160,258l4,22M172,264l6,22M186,272l2,20M198,288l8,22M216,300l4,22M230,308l2,22" />
        <path d="M372,262l-6,22M354,274l-4,20M340,285l-6,22M322,296l-6,22M306,306l-4,22" />
      </g>
      <path d="M143,322 L117,213" stroke="#1010e0" strokeWidth="5" />
      <path d="M143,322 L225,400" stroke="#e01010" strokeWidth="4" />
      <path d="M143,322 L165,310" stroke="#10e010" strokeWidth="5" />
      <path d="M165,310 L235,270" stroke="#b4f0a8" strokeWidth="3" />
      <polygon points="345,405 380,393 415,405 415,445 380,458 345,445" fill="#9c9cb0" opacity=".9" />
      <polygon points="345,405 380,393 415,405 380,417" fill="#b0b0c2" opacity=".9" />
      <polygon points="427,415 468,415 447,435" fill="#4a4a66" />
    </g>
  );
}

function Triad() {
  return (
    <g fontFamily="DejaVu Sans, sans-serif" fontWeight="700" fontSize="9" fill="#1c1c2c">
      <path d="M1033,671 V650" stroke="#1a1a9a" strokeWidth="1.2" />
      <path d="M1033,661 V654" stroke="#2020b0" strokeWidth="3" />
      <path d="M1033,671 L1045,665" stroke="#1e8a32" strokeWidth="1.6" />
      <path d="M1033,671 L1050,679" stroke="#8a1e2a" strokeWidth="1.8" />
      <text x="1034" y="651">Z</text>
      <text x="1046" y="664">Y</text>
      <text x="1051" y="681">X</text>
    </g>
  );
}

function Viewport() {
  return (
    <div className="min-h-0 flex-1 bg-gradient-to-b from-[#333363] to-[#9898ad]">
      <svg viewBox="366 121 696 579" className="block h-full w-full">
        <Pipe />
        <NavCube />
        <Triad />
      </svg>
    </div>
  );
}

export default function App() {
  return (
    <div className="relative flex h-[773px] w-[1062px] flex-col overflow-hidden bg-[#f6f6f6] font-['DejaVu_Sans',sans-serif] text-[12px]">
      {/* Title bar */}
      <div className="relative flex h-[37px] shrink-0 items-center justify-center border-t border-[#7c726c] bg-[#5a514b]">
        <span className="font-['Noto_Sans',sans-serif] text-[12px] font-bold text-[#f4f2f0]">FreeCAD 0.21.0</span>
        <span className="absolute left-[1006px] top-[20px] h-[2px] w-[8px] bg-white" />
        <span className="absolute left-[1034px] top-[8px] flex h-[18px] w-[18px] items-center justify-center rounded-full bg-[#ee8a35]">
          <X size={12} strokeWidth={3.4} className="text-white" />
        </span>
      </div>

      <TopMenu />
      <ToolbarOne />
      <ToolbarTwo />
      <Dropdown />

      {/* Main area */}
      <div className="flex min-h-0 flex-1">
        <LeftPanel />
        <div className="flex min-w-0 flex-1 flex-col">
          <Viewport />
          <div className="flex h-[35px] shrink-0 items-stretch bg-[#f6f6f6] pb-px">
            <div className="flex w-[234px] items-center border-x border-b-[3px] border-x-[#dcdcdc] border-b-[#4a80ea] pl-[2px] pt-px text-[#555]">
              <FreeCadIco />
              <span className="ml-[7px]">Curves_WB_Reflect_Lines : 1</span>
              <X size={15} strokeWidth={2.2} className="ml-[12px] text-[#8a8a8a]" />
            </div>
          </div>
        </div>
      </div>

      {/* Status bar */}
      <div className="flex h-[38px] shrink-0 items-center text-[#555]">
        <div className="ml-[6px] w-[762px] overflow-hidden whitespace-nowrap">
          {"Creates the reflect lines on a shape, according to a view direction<br><br><b>Usage :</b><br>Select an object and activa"}
        </div>
        <div className="ml-[1px] flex h-[26px] w-[121px] items-center justify-center gap-[6px] rounded-[3px] border border-[#cfcfcf] bg-gradient-to-b from-[#f6f6f6] to-[#e8e8e8] text-[#777]">
          <svg width="12" height="16" viewBox="0 0 12 16" fill="none" stroke="#333" strokeWidth="1.4">
            <rect x="1" y="1" width="10" height="14" rx="5" />
            <path d="M4 4h4v4H4z" />
          </svg>
          Blender
        </div>
        <div className="ml-[10px] whitespace-nowrap">54,24 mm x 45,12 mm</div>
      </div>
    </div>
  );
}
